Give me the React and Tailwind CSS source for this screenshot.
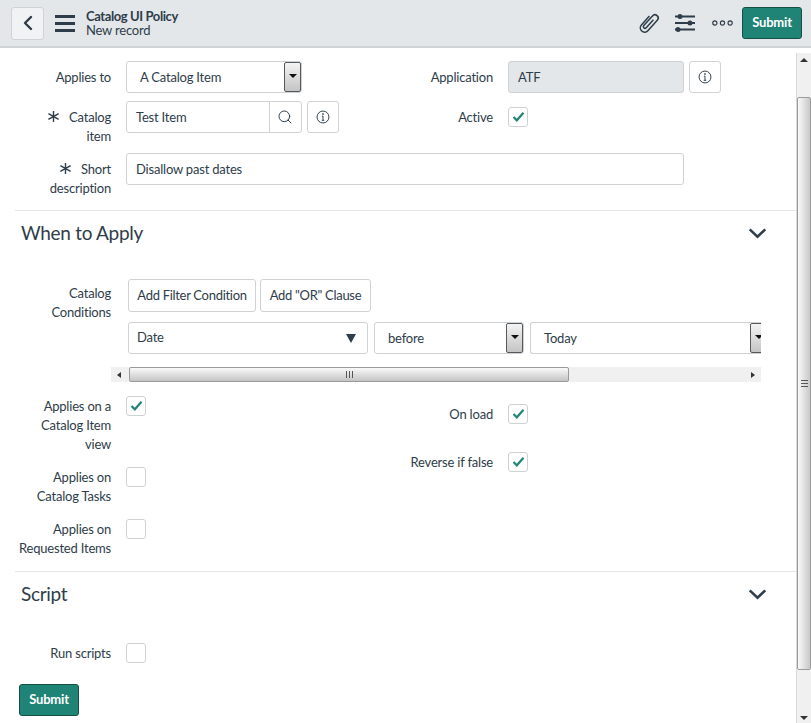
import { ChevronLeft, Search } from 'lucide-react';

const FONT = "font-['Lato','Noto_Sans',sans-serif]";

function Asterisk({ className }) {
    return (
        <svg viewBox="0 0 14 14" className={className} fill="none" stroke="#2e3d49" strokeWidth="1.5">
            <path d="M7 1v12M1.5 3.8l11 6.4M12.5 3.8l-11 6.4" />
        </svg>
    );
}

function InfoButton() {
    return (
        <div className="flex h-8 w-8 shrink-0 items-center justify-center rounded-[3px] border border-[#d0d3d6] bg-white">
            <svg viewBox="0 0 16 16" className="h-[14px] w-[14px]" fill="none" stroke="#2e3d49" strokeWidth="1.1">
                <circle cx="8" cy="8" r="6.8" />
                <path d="M8 7v4.6M6.6 11.8h2.8M6.8 7h1.2" />
                <circle cx="8" cy="4.6" r="0.5" fill="#2e3d49" />
            </svg>
        </div>
    );
}

function Checkbox({ checked }) {
    return (
        <div className="flex h-5 w-5 shrink-0 items-center justify-center rounded-[3px] border border-[#cfd2d5] bg-white">
            {checked && (
                <svg viewBox="0 0 14 12" className="h-[10px] w-[13px]" fill="none" stroke="#1f8476" strokeWidth="2.6">
                    <path d="M1 6l4 4 8-9" />
                </svg>
            )}
        </div>
    );
}

function SelectArrow() {
    return (
        <div className="flex h-full w-[17px] shrink-0 items-start justify-center rounded-[2px] border border-[#55595c] bg-gradient-to-b from-[#f4f4f4] to-[#c4c4c4] pt-[11px]">
            <div className="h-0 w-0 border-x-[4px] border-t-[4px] border-x-transparent border-t-[#111]" />
        </div>
    );
}

function NativeSelect({ value, className, clipped }) {
    return (
        <div className={`flex h-8 items-center rounded-l-[3px] border border-[#cfd2d5] bg-white ${clipped ? 'border-r-0' : 'rounded-r-[3px]'} ${className}`}>
            <span className="flex-1 pl-[13px] pt-[2px] text-[#2e3d49]">{value}</span>
            <SelectArrow />
        </div>
    );
}

function Label({ children, required, width = 'w-[96px]' }) {
    return (
        <div className={`${width} shrink-0 pt-px text-right leading-[19px] text-[#2e3d49]`}>
            {required && <Asterisk className="mr-[9px] inline-block h-[13px] w-[13px] align-[-1px]" />}
            {children}
        </div>
    );
}

function CheckRow({ label, checked, className }) {
    return (
        <div className={`flex gap-[15px] ${className}`}>
            <Label>{label}</Label>
            <Checkbox checked={checked} />
        </div>
    );
}

function SectionHead({ title, className }) {
    return (
        <div className={`flex items-center justify-between border-t border-[#e4e6e7] pl-[6px] pr-[29px] ${className}`}>
            <h2 className="text-[19px] leading-[44px] tracking-[-0.3px] text-[#2e3d49]">{title}</h2>
            <svg viewBox="0 0 20 12" className="h-[11px] w-[19px]" fill="none" stroke="#2e3d49" strokeWidth="2.8">
                <path d="M1.5 1.5L10 9.5l8.5-8" />
            </svg>
        </div>
    );
}

function Scrollbar() {
    return (
        <div className="mt-[5px] flex w-[15px] shrink-0 flex-col items-center border-l border-[#d9d9d9] bg-[#f0f0f0]">
            <div className="mt-[5px] mb-[35px] h-0 w-0 border-x-[4px] border-b-[4px] border-x-transparent border-b-[#333]" />
            <div className="flex h-[573px] w-[14px] items-center justify-center rounded-[2px] border border-[#9a9a9a] bg-gradient-to-r from-[#fafafa] to-[#c8c8c8]">
                <div className="h-[7px] w-[7px] border-y border-[#555] py-[2px]">
                    <div className="h-px bg-[#555]" />
                </div>
            </div>
            <div className="mt-auto mb-[3px] h-0 w-0 border-x-[4px] border-t-[4px] border-x-transparent border-t-[#333]" />
        </div>
    );
}

function HScrollbar() {
    return (
        <div className="ml-[96px] mt-[13px] flex h-[15px] w-[650px] items-center bg-[#f0f0f0]">
            <div className="ml-[6px] mr-[8px] h-0 w-0 border-y-[3px] border-r-[4px] border-y-transparent border-r-[#333]" />
            <div className="flex h-[15px] w-[440px] items-center justify-center rounded-[2px] border border-[#9a9a9a] bg-gradient-to-b from-[#fafafa] to-[#c4c4c4]">
                <span className="h-[7px] w-[7px] border-x border-[#555] px-[2px]">
                    <span className="block h-full w-px bg-[#555]" />
                </span>
            </div>
            <div className="ml-auto mr-[6px] h-0 w-0 border-y-[3px] border-l-[4px] border-y-transparent border-l-[#333]" />
        </div>
    );
}

function SubmitButton() {
    return (
        <div className="flex h-8 w-[60px] items-center justify-center rounded-[3px] border border-[#174f47] bg-[#1f8476] font-bold text-white">
            Submit
        </div>
    );
}

export default function App() {
    return (
        <div className={`flex h-[723px] w-[811px] flex-col overflow-hidden bg-white text-[13px] tracking-[-0.2px] ${FONT}`}>
            <header className="flex h-[48px] shrink-0 items-center border-b-2 border-[#d0d3d6] bg-[#e4e7ea] pl-[11px] pr-[9px]">
                <div className="flex h-[33px] w-[33px] items-center justify-center rounded-[3px] border border-[#d0d3d6] bg-[#f1f2f3]">
                    <ChevronLeft size={24} strokeWidth={2.4} color="#2e3d49" />
                </div>
                <div className="ml-[11px] flex w-[20px] flex-col gap-[4px]">
                    <div className="h-[3px] bg-[#2e3d49]" />
                    <div className="h-[3px] bg-[#2e3d49]" />
                    <div className="h-[3px] bg-[#2e3d49]" />
                </div>
                <div className="ml-[11px] text-[13px] leading-[14px] text-[#2e3d49]">
                    <div className="font-bold tracking-[-0.4px]">Catalog UI Policy</div>
                    <div>New record</div>
                </div>
                <div className="ml-auto flex items-center">
                    <svg viewBox="0 0 24 24" className="h-[26px] w-[26px]" fill="none" stroke="#2e3d49" strokeWidth="1.4">
                        <g transform="rotate(42 12 12)">
                            <path d="M8 7v11a4 4 0 0 0 8 0V5a3 3 0 0 0-6 0v12a1.5 1.5 0 0 0 3 0V7" />
                        </g>
                    </svg>
                    <svg viewBox="0 0 22 18" className="ml-[12px] h-[18px] w-[22px]" fill="#2e3d49" stroke="#2e3d49" strokeWidth="1.8">
                        <path d="M1 2.5h20M1 9h20M1 15.5h20" />
                        <circle cx="6" cy="2.5" r="1.6" />
                        <circle cx="16" cy="9" r="1.6" />
                        <circle cx="4" cy="15.5" r="1.6" />
                    </svg>
                    <svg viewBox="0 0 22 6" className="ml-[16px] h-[6px] w-[21px]" fill="none" stroke="#2e3d49" strokeWidth="1.2">
                        <circle cx="3" cy="3" r="2.2" />
                        <circle cx="11" cy="3" r="2.2" />
                        <circle cx="19" cy="3" r="2.2" />
                    </svg>
                    <div className="ml-[9px]">
                        <SubmitButton />
                    </div>
                </div>
            </header>

            <div className="flex min-h-0 flex-1">
                <main className="min-w-0 flex-1 pl-[15px]">
                    <div className="mt-[13px] grid grid-cols-[390px_1fr] gap-y-[8px]">
                        <div className="flex items-center gap-[15px]">
                            <Label>Applies to</Label>
                            <NativeSelect value="A Catalog Item" className="w-[176px]" />
                        </div>
                        <div className="flex items-center gap-[15px]">
                            <Label width="w-[88px]">Application</Label>
                            <div className="flex h-8 w-[176px] items-center rounded-[3px] border border-[#cfd2d5] bg-[#e4e7ea] pl-[9px] pt-[2px] text-[#2e3d49]">ATF</div>
                            <div className="-ml-[10px]"><InfoButton /></div>
                        </div>
                        <div className="flex items-start gap-[15px]">
                            <div className="pt-[6px]"><Label required>Catalog<br />item</Label></div>
                            <div className="flex h-8 w-[176px] items-center rounded-[3px] border border-[#cfd2d5] bg-white">
                                <span className="flex-1 pl-[9px] pt-[2px] text-[#2e3d49]">Test Item</span>
                                <div className="flex h-full w-[32px] items-center justify-center border-l border-[#cfd2d5] pr-[2px]">
                                    <Search size={16} strokeWidth={1.5} color="#2e3d49" />
                                </div>
                            </div>
                            <div className="-ml-[10px]"><InfoButton /></div>
                        </div>
                        <div className="flex items-start gap-[15px]">
                            <div className="pt-[6px]"><Label width="w-[88px]">Active</Label></div>
                            <div className="pt-[6px]"><Checkbox checked /></div>
                        </div>
                    </div>

                    <div className="mt-[7px] flex items-start gap-[15px]">
                        <div className="pt-[6px]"><Label required>Short description</Label></div>
                        <div className="flex h-8 w-[558px] items-center rounded-[3px] border border-[#cfd2d5] bg-white pl-[9px] pt-[2px] text-[#2e3d49]">Disallow past dates</div>
                    </div>

                    <SectionHead title="When to Apply" className="mt-[12px]" />

                    <div className="mt-[24px] flex gap-[17px]">
                        <div className="pt-[4px]"><Label>Catalog Conditions</Label></div>
                        <div className="w-[633px] overflow-hidden">
                            <div className="flex gap-1 tracking-[-0.3px] text-[#2e3d49]">
                                <div className="flex h-[33px] w-[128px] items-center justify-center rounded-[3px] border border-[#cfd2d5]">Add Filter Condition</div>
                                <div className="flex h-[33px] w-[111px] items-center justify-center rounded-[3px] border border-[#cfd2d5]">Add "OR" Clause</div>
                            </div>
                            <div className="mt-[10px] flex gap-[6px]">
                                <div className="flex h-8 w-[240px] shrink-0 items-center justify-between rounded-[3px] border border-[#cfd2d5] pl-2 pr-[11px] text-[#2e3d49]">
                                    <span className="-mt-[1px]">Date</span>
                                    <div className="h-0 w-0 border-x-[5px] border-t-[9px] border-x-transparent border-t-[#2e3d49]" />
                                </div>
                                <NativeSelect value="before" className="w-[150px] shrink-0" />
                                <NativeSelect value="Today" className="w-[237px] shrink-0" clipped />
                            </div>
                        </div>
                    </div>
                    <HScrollbar />

                    <div className="mt-[14px] grid grid-cols-[390px_1fr]">
                        <div className="flex flex-col">
                            <CheckRow label="Applies on a Catalog Item view" checked className="h-[62px]" />
                            <CheckRow label="Applies on Catalog Tasks" className="mt-[9px] h-[43px]" />
                            <CheckRow label="Applies on Requested Items" className="mt-[9px] h-[43px]" />
                        </div>
                        <div className="flex flex-col gap-[28px] pt-[8px]">
                            <div className="flex items-center gap-[15px]">
                                <Label width="w-[88px]">On load</Label>
                                <Checkbox checked />
                            </div>
                            <div className="flex items-center gap-[15px]">
                                <Label width="w-[88px]">Reverse if false</Label>
                                <Checkbox checked />
                            </div>
                        </div>
                    </div>

                    <SectionHead title="Script" className="mt-[9px]" />

                    <div className="mt-[27px] flex items-center gap-[15px]">
                        <Label>Run scripts</Label>
                        <Checkbox />
                    </div>
                    <div className="ml-[4px] mt-[21px]">
                        <SubmitButton />
                    </div>
                </main>
                <Scrollbar />
            </div>
        </div>
    );
}
